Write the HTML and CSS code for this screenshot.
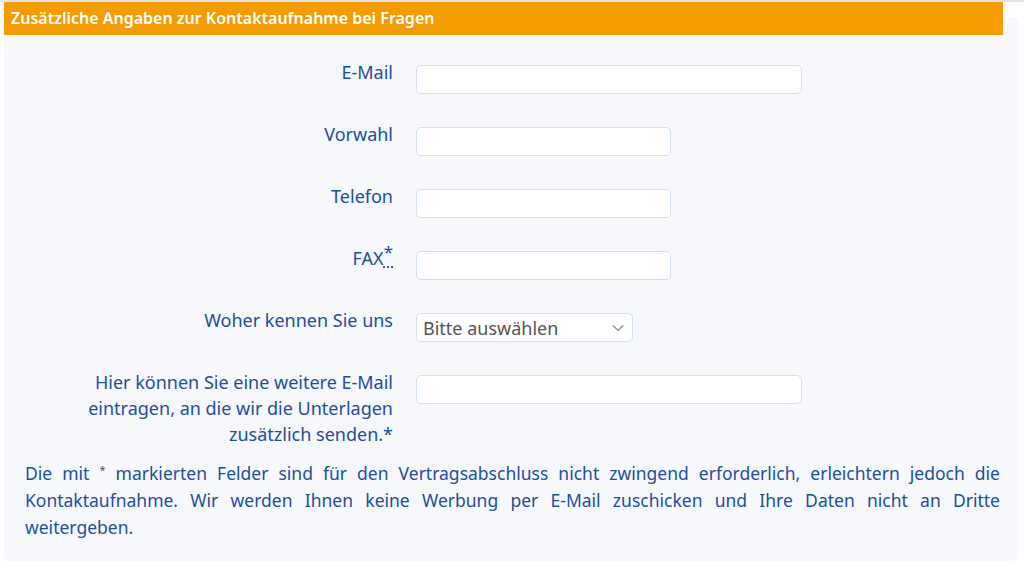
FILE: index.html
```html
<!DOCTYPE html>
<html lang="de">
<head>
<meta charset="utf-8">
<title>Kontaktaufnahme</title>
<link rel="stylesheet" href="styles.css">
</head>
<body>
<div class="topline"></div>
<h2 class="section-title">Zusätzliche Angaben zur Kontaktaufnahme bei Fragen</h2>
<div class="panel">
  <form class="form">
    <label class="label" for="email">E-Mail</label>
    <input class="field field-wide" id="email" type="text">

    <label class="label" for="vorwahl">Vorwahl</label>
    <input class="field field-mid" id="vorwahl" type="text">

    <label class="label" for="telefon">Telefon</label>
    <input class="field field-mid" id="telefon" type="text">

    <label class="label" for="fax">FAX<abbr class="abbr" title="optional"><sup class="mark">*</sup></abbr></label>
    <input class="field field-mid" id="fax" type="text">

    <label class="label" for="woher">Woher kennen Sie uns</label>
    <div class="select">
      <span class="select-text">Bitte auswählen</span>
      <svg class="chevron" width="12" height="8" viewBox="0 0 12 8"><path d="M1 1.5 L6 6.5 L11 1.5" fill="none" stroke="#8a8a8a" stroke-width="1.2"/></svg>
    </div>

    <label class="label" for="email2">Hier können Sie eine weitere E-Mail eintragen, an die wir die Unterlagen zusätzlich senden.*</label>
    <input class="field field-wide" id="email2" type="text">
  </form>
  <p class="note">Die mit <sup class="note-mark">*</sup> markierten Felder sind für den Vertragsabschluss nicht zwingend erforderlich, erleichtern jedoch die Kontaktaufnahme. Wir werden Ihnen keine Werbung per E-Mail zuschicken und Ihre Daten nicht an Dritte weitergeben.</p>
</div>
</body>
</html>
```

FILE: styles.css
```css
html, body {
  margin: 0;
  padding: 0;
  background: #ffffff;
  font-family: "Noto Sans", "DejaVu Sans", sans-serif;
}

.topline {
  height: 2px;
  background: #e4e4e4;
}

.section-title {
  position: relative;
  z-index: 1;
  margin: 0 0 0 4px;
  width: 999px;
  height: 33px;
  padding-left: 7px;
  box-sizing: border-box;
  background: #f59c00;
  color: #ffffff;
  font-size: 16px;
  font-weight: 600;
  line-height: 33px;
}

.panel {
  margin: -18px 0 0 4px;
  width: 1014px;
  box-sizing: border-box;
  padding: 42px 18px 20px 21px;
  background: #f7f8fc;
  border-radius: 6px;
}

.form {
  display: grid;
  grid-template-columns: 324px auto;
  column-gap: 23px;
  row-gap: 27px;
  align-items: start;
  margin-left: 44px;
  justify-content: start;
}

.label {
  text-align: right;
  color: #1c4f9d;
  font-size: 18px;
  line-height: 26px;
}

.abbr {
  text-decoration: underline dotted #1c4f9d;
  text-underline-offset: 2px;
  cursor: help;
}

.mark {
  font-size: 17px;
  line-height: 0;
}

.field {
  display: block;
  margin-top: 6px;
  height: 29px;
  box-sizing: border-box;
  border: 1px solid #d4dff0;
  border-radius: 5px;
  background: #ffffff;
  padding: 0 8px;
  font: inherit;
}

.field-wide { width: 386px; }
.field-mid { width: 255px; }

.select {
  margin-top: 6px;
  width: 217px;
  height: 29px;
  box-sizing: border-box;
  border: 1px solid #d4dff0;
  border-radius: 5px;
  background: #ffffff;
  display: flex;
  align-items: center;
  justify-content: space-between;
  padding: 0 8px 0 6px;
}

.select-text {
  color: #555555;
  font-size: 18px;
}

.chevron {
  display: block;
}

.note {
  margin: 13px 0 0 0;
  color: #1c4f9d;
  font-size: 17.5px;
  line-height: 27px;
  text-align: justify;
}

.note-mark {
  font-size: 11px;
  color: #555;
  vertical-align: 6px;
  line-height: 0;
}
```
